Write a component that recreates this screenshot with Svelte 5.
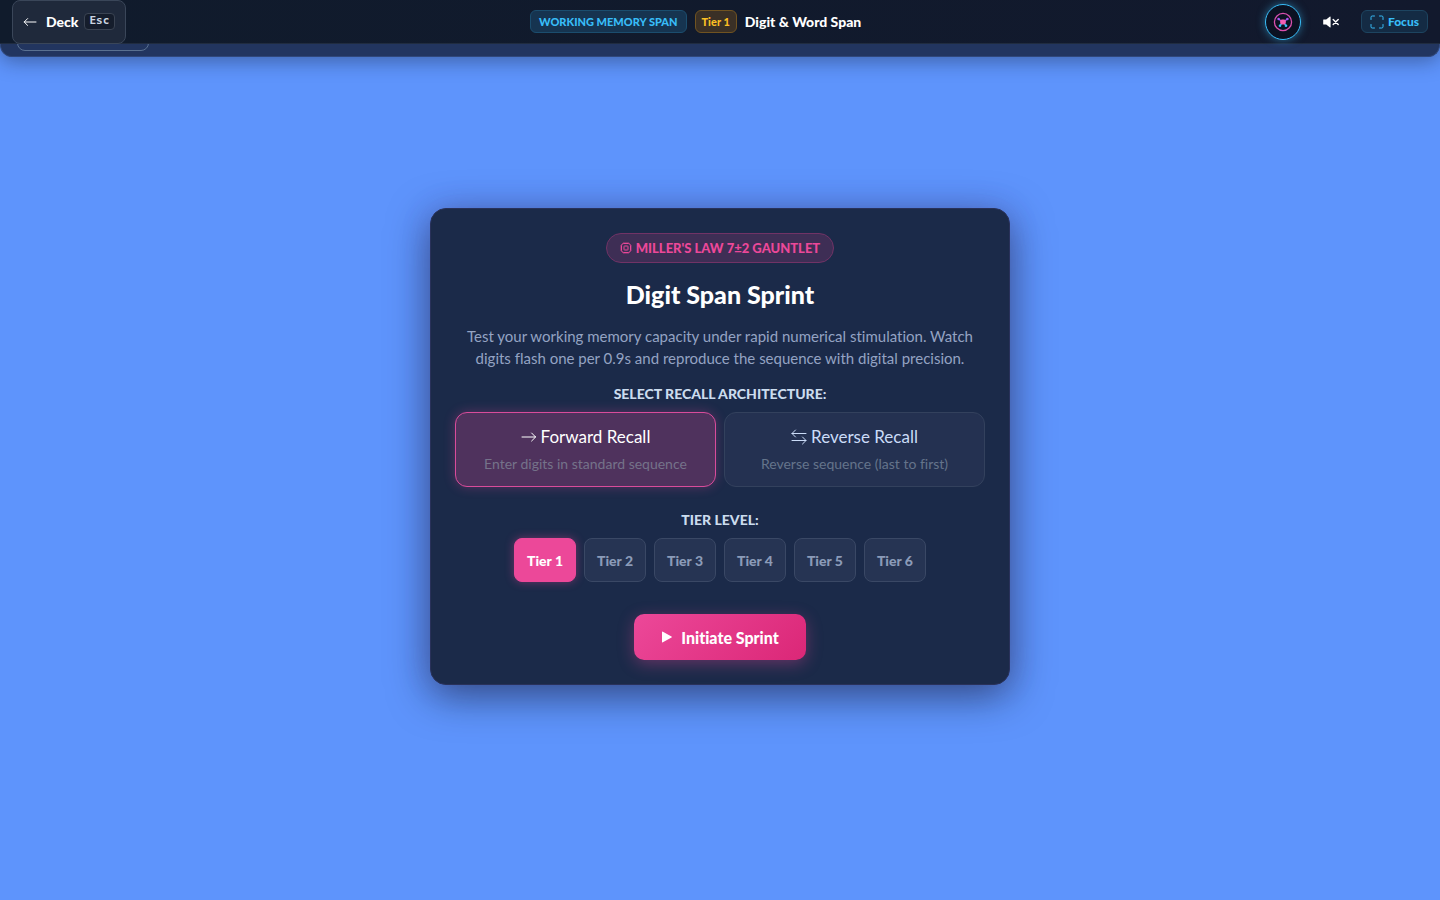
<script lang="ts">
    const modes = [
        { id: "forward", name: "Forward Recall", hint: "Enter digits in standard sequence" },
        { id: "reverse", name: "Reverse Recall", hint: "Reverse sequence (last to first)" }
    ];
    const tiers = [1, 2, 3, 4, 5, 6];

    let mode = $state("forward");
    let tier = $state(1);
    let muted = $state(true);
</script>

<div class="page">
    <div class="underbar">
        <div class="ghost"></div>
    </div>

    <header class="topbar">
        <button class="deck">
            <svg width="14" height="14" viewBox="0 0 14 14" fill="none" stroke="currentColor" stroke-linecap="round" stroke-linejoin="round">
                <path d="M13 7H1.2M4.6 3.6L1.2 7l3.4 3.4" />
            </svg>
            <span>Deck</span>
            <kbd>Esc</kbd>
        </button>
        <div class="heading">
            <span class="chip blue">WORKING MEMORY SPAN</span>
            <span class="chip amber">Tier {tier}</span>
            <strong>Digit &amp; Word Span</strong>
        </div>
        <div class="tools">
            <button class="orb" aria-label="Companion">
                <svg width="20" height="20" viewBox="0 0 20 20" fill="none">
                    <circle cx="10" cy="10" r="8.6" stroke="#d94fae" stroke-width="1.3" />
                    <path d="M5.8 7.2L10 10l4.2-2.8" stroke="#a855f7" stroke-width="1.2" />
                    <path d="M7 13.5L10 10l3 3.5" stroke="#38bdf8" stroke-width="1.2" />
                    <circle cx="5.6" cy="7" r="1.3" fill="#a855f7" />
                    <circle cx="14.4" cy="7" r="1.3" fill="#a855f7" />
                    <circle cx="7" cy="13.8" r="1.3" fill="#38bdf8" />
                    <circle cx="13" cy="13.8" r="1.3" fill="#38bdf8" />
                    <rect x="7.2" y="7.4" width="5.6" height="5.2" rx="1.8" fill="#f45fb4" />
                </svg>
            </button>
            <button class="mute" aria-label="Toggle sound" aria-pressed={muted} onclick={() => (muted = !muted)}>
                <svg width="16" height="14" viewBox="0 0 16 14">
                    <path d="M.6 4.4h2.6L7 1.6q.6-.3.6.4v10q0 .7-.6.4L3.2 9.6H.6q-.4 0-.4-.4V4.8q0-.4.4-.4z" fill="currentColor" />
                    {#if muted}
                        <path d="M10.2 4.4l5 5.2M15.2 4.4l-5 5.2" stroke="currentColor" stroke-width="1.4" stroke-linecap="round" />
                    {/if}
                </svg>
            </button>
            <button class="focus">
                <svg width="14" height="14" viewBox="0 0 14 14" fill="none" stroke="currentColor" stroke-linecap="round">
                    <path d="M1 4.5V2.2Q1 1 2.2 1h2.3M9.5 1h2.3Q13 1 13 2.2v2.3M13 9.5v2.3q0 1.2-1.2 1.2H9.5M4.5 13H2.2Q1 13 1 11.8V9.5" />
                </svg>
                Focus
            </button>
        </div>
    </header>

    <main>
        <section class="card">
            <div class="badge">
                <svg width="12" height="12" viewBox="0 0 12 12" fill="none" stroke="currentColor">
                    <rect x="1.5" y="1.5" width="9" height="9" rx="2.2" />
                    <rect x="4" y="4" width="4" height="4" rx=".6" />
                    <path d="M4 .2v1.3M6 .2v1.3M8 .2v1.3M4 10.5v1.3M6 10.5v1.3M8 10.5v1.3M.2 4h1.3M.2 6h1.3M.2 8h1.3M10.5 4h1.3M10.5 6h1.3M10.5 8h1.3" stroke-width=".8" />
                </svg>
                MILLER'S LAW 7±2 GAUNTLET
            </div>
            <h1>Digit Span Sprint</h1>
            <p>Test your working memory capacity under rapid numerical stimulation. Watch digits flash one per 0.9s and reproduce the sequence with digital precision.</p>

            <h2>SELECT RECALL ARCHITECTURE:</h2>
            <div class="modes">
                {#each modes as m}
                    <button class="mode" class:active={mode === m.id} onclick={() => (mode = m.id)}>
                        <span class="name">
                            <svg width="16" height="18" viewBox="0 0 16 18" fill="none" stroke="currentColor" stroke-linecap="round" stroke-linejoin="round">
                                {#if m.id === "forward"}
                                    <path d="M1 9h13.6M10.6 5l4 4-4 4" />
                                {:else}
                                    <path d="M15 5.5H1M4.5 2L1 5.5 4.5 9M1 12.5h14M11.5 9l3.5 3.5-3.5 3.5" />
                                {/if}
                            </svg>
                            {m.name}
                        </span>
                        <span class="hint">{m.hint}</span>
                    </button>
                {/each}
            </div>

            <h2>TIER LEVEL:</h2>
            <div class="tiers">
                {#each tiers as t}
                    <button class="tier" class:active={tier === t} onclick={() => (tier = t)}>Tier {t}</button>
                {/each}
            </div>

            <button class="start">
                <svg width="12" height="12" viewBox="0 0 12 12" fill="currentColor">
                    <path d="M1 1.2q0-1 .9-.5l8.6 4.7q.9.6 0 1.2l-8.6 4.7q-.9.5-.9-.5z" />
                </svg>
                Initiate Sprint
            </button>
        </section>
    </main>
</div>

<style>
    :global(body){
        margin: 0;
        background-color: #5e94fc;
    }
    .page{
        position: relative;
        display: flex;
        flex-direction: column;
        min-height: 100vh;
        box-sizing: border-box;
        font-family: Lato, "Open Sans", sans-serif;
        font-variant-ligatures: none;
        color: white;
    }
    .page :global(*){
        box-sizing: border-box;
    }
    button{
        font-family: inherit;
        font-variant-ligatures: none;
        color: inherit;
        margin: 0;
        cursor: pointer;
    }
    svg{
        flex: none;
    }

    /* the bar that peeks out from under the top bar */
    .underbar{
        position: absolute;
        inset: 0 0 auto 0;
        height: 57px;
        padding: 7px 16px;
        border: 1px solid #30477a;
        border-top: none;
        border-radius: 0 0 12px 12px;
        background-color: #22355f;
        box-shadow: 0 4px 20px rgba(15, 23, 42, 0.4);
    }
    .ghost{
        width: 132px;
        height: 44px;
        border: 1px solid #5a7191;
        border-radius: 8px;
    }
    .topbar{
        position: absolute;
        inset: 0 0 auto 0;
        display: flex;
        align-items: center;
        justify-content: space-between;
        height: 44px;
        padding: 0 12px;
        background: linear-gradient(90deg, #101b2c, #12192d);
        border-bottom: 1px solid #202c40;
    }
    .deck{
        display: flex;
        align-items: center;
        height: 44px;
        padding: 0 10px;
        background-color: #1f293b;
        border: 1px solid #3a4659;
        border-radius: 8px;
        font-size: 14px;
        font-weight: 900;
    }
    .deck span{
        margin: 0 5px 0 9px;
    }
    kbd{
        height: 17px;
        padding: 0 5px;
        border: 1px solid #3a4352;
        border-radius: 4px;
        background-color: #151d2c;
        color: #cbd5e1;
        font: bold 11px/14px "DejaVu Sans Mono", monospace;
    }
    .heading{
        display: flex;
        align-items: center;
        gap: 8px;
    }
    .heading strong{
        font-size: 14px;
        font-weight: 900;
    }
    .chip{
        height: 23px;
        padding: 0 8px;
        border: 1px solid;
        border-radius: 6px;
        font-size: 11px;
        line-height: 21px;
        font-weight: 900;
    }
    .blue{
        color: #38bdf8;
        background-color: #163450;
        border-color: #1b4d6e;
    }
    .amber{
        padding: 0 6px;
        color: #fbbf24;
        background-color: #3a3026;
        border-color: #705321;
    }
    .tools{
        display: flex;
        align-items: center;
    }
    .orb{
        display: grid;
        place-items: center;
        width: 36px;
        height: 36px;
        padding: 0;
        border: 1px solid #38bdf8;
        border-radius: 50%;
        background-color: #0b1222;
        box-shadow: 0 0 8px rgba(56, 189, 248, 0.5);
    }
    .mute{
        display: grid;
        place-items: center;
        width: 44px;
        height: 32px;
        margin: 0 8px;
        padding: 0;
        background: none;
        border: none;
    }
    .focus{
        display: flex;
        align-items: center;
        gap: 4px;
        height: 23px;
        padding: 0 8px;
        color: #38bdf8;
        background-color: #142b44;
        border: 1px solid #1d4460;
        border-radius: 6px;
        font-size: 12px;
        font-weight: 900;
    }

    main{
        flex: 1;
        display: flex;
        align-items: center;
        justify-content: center;
        padding: 65px 16px 72px;
    }
    .card{
        display: flex;
        flex-direction: column;
        align-items: center;
        width: 100%;
        max-width: 580px;
        padding: 24px;
        border: 1px solid #29315a;
        border-radius: 16px;
        background-color: #1b2a49;
        box-shadow: 0 10px 40px rgba(15, 23, 42, 0.6), 0 0 30px rgba(139, 92, 246, 0.16);
        text-align: center;
    }
    .badge{
        display: flex;
        align-items: center;
        gap: 4px;
        height: 30px;
        padding: 0 13px;
        border: 1px solid #713366;
        border-radius: 15px;
        background-color: #3e2e55;
        color: #ec4899;
        font-size: 13px;
        font-weight: 900;
    }
    h1{
        margin: 15px 0;
        font-size: 25px;
        line-height: 32px;
        font-weight: 900;
    }
    p{
        max-width: 520px;
        margin: 0 0 16px;
        color: #94a3c3;
        font-size: 15px;
        line-height: 22px;
    }
    h2{
        margin: 0 0 9px;
        color: #cbdcee;
        font-size: 14px;
        line-height: 18px;
        font-weight: 900;
    }
    .modes{
        display: grid;
        grid-template-columns: 1fr 1fr;
        gap: 8px;
        width: 100%;
        margin-bottom: 24px;
    }
    .mode{
        display: flex;
        flex-direction: column;
        align-items: center;
        gap: 4px;
        height: 75px;
        padding: 12px;
        border: 1px solid #33415d;
        border-radius: 12px;
        background-color: #243151;
        color: #cbdcf8;
    }
    .mode.active{
        border-color: #d94c9b;
        background-color: #4f325d;
        box-shadow: 0 0 12px rgba(236, 72, 153, 0.3);
        color: white;
    }
    .name{
        display: flex;
        align-items: center;
        gap: 4px;
        font-size: 17px;
        line-height: 24px;
    }
    .hint{
        color: #64748b;
        font-size: 14px;
        line-height: 22px;
    }
    .active .hint{
        color: #75728a;
    }
    .tiers{
        display: flex;
        flex-wrap: wrap;
        justify-content: center;
        gap: 8px;
        margin-bottom: 32px;
    }
    .tier{
        height: 44px;
        padding: 0 12px;
        border: 1px solid #3a4865;
        border-radius: 8px;
        background-color: #263453;
        color: #8b9bb8;
        font-size: 14px;
        font-weight: 900;
    }
    .tier.active{
        border-color: #ec4899;
        background-color: #ec4899;
        box-shadow: 0 0 10px rgba(236, 72, 153, 0.4);
        color: white;
    }
    .start{
        display: flex;
        align-items: center;
        gap: 8px;
        height: 46px;
        padding: 0 27px;
        border: none;
        border-radius: 10px;
        background: linear-gradient(135deg, #ec4899, #db2777);
        box-shadow: 0 4px 16px rgba(236, 72, 153, 0.35);
        font-size: 16px;
        font-weight: 900;
    }
</style>
